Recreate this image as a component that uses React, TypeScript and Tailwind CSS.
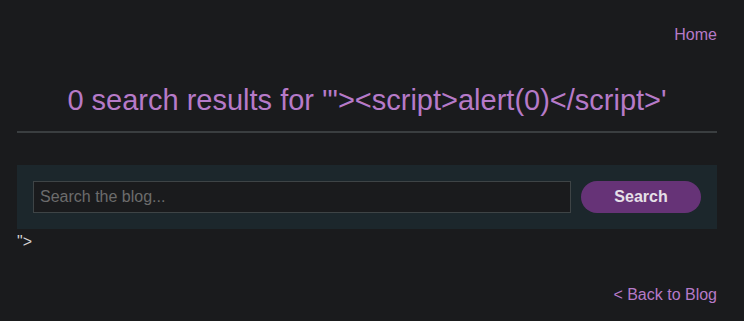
export default function App() {
  return (
    <div className="min-h-[321px] bg-[#1a1b1d] font-['Liberation_Sans',Arial,sans-serif] text-[#d4d4d4]">
      <div className="ml-[17px] w-[700px] pb-4">
        <header className="flex justify-end pt-[23px]">
          <a href="#" className="text-base text-[#b67ac8]">
            Home
          </a>
        </header>
        <h1 className="mt-[36px] text-center text-[29px] leading-[34px] text-[#b67ac8]">
          0 search results for '"&gt;&lt;script&gt;alert(0)&lt;/script&gt;'
        </h1>
        <hr className="mt-[14px] border-t-2 border-[#3a3e40]" />
        <section className="mt-[32px] flex items-center gap-[10px] bg-[#1c272c] px-4 py-4">
          <input
            type="text"
            placeholder="Search the blog..."
            className="h-8 flex-1 border border-[#3e4446] bg-[#1a1b1d] px-[6px] text-base text-[#d4d4d4] outline-none placeholder:text-[#6c6c6c]"
          />
          <button className="h-8 w-[120px] rounded-full bg-[#663377] text-base font-bold text-[#e6e0e8]">
            Search
          </button>
        </section>
        <p className="text-base leading-[26px]">"&gt;</p>
        <div className="mt-[28px] flex justify-end">
          <a href="#" className="text-base text-[#b67ac8]">
            &lt; Back to Blog
          </a>
        </div>
      </div>
    </div>
  );
}
